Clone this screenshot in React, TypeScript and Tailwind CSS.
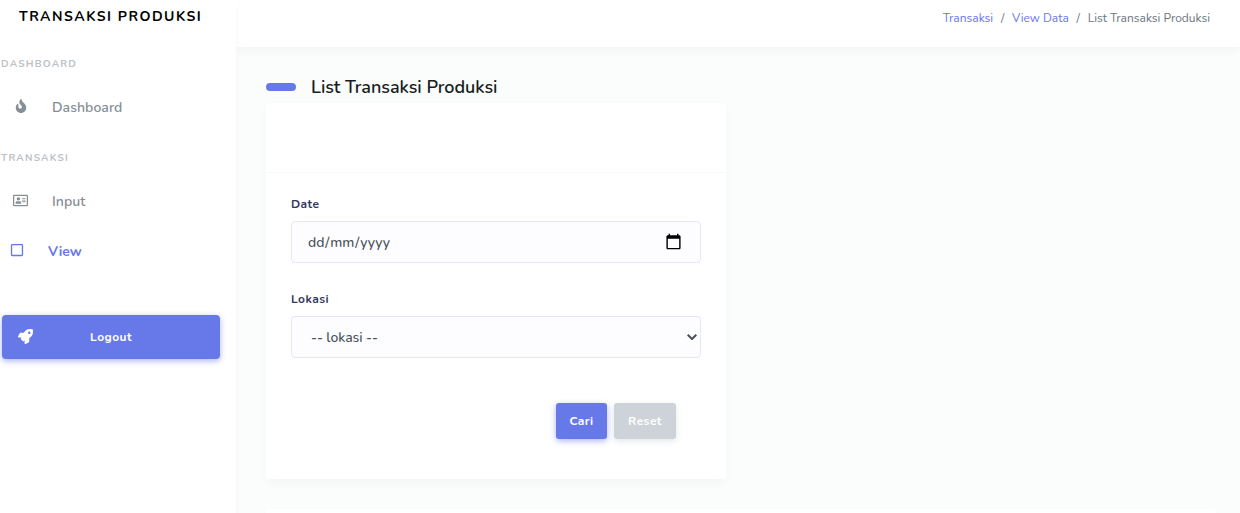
import type { ReactNode } from "react";
import { FaFire, FaRegAddressCard, FaRegSquare, FaRocket } from "react-icons/fa";

function MenuHeader({ children }: { children: ReactNode }) {
  return (
    <div className="flex h-[30px] items-center pl-px text-[10px] font-bold uppercase tracking-[1.2px] text-[#bcc1c6]">
      {children}
    </div>
  );
}

function Sidebar() {
  return (
    <aside className="relative z-10 flex h-[513px] w-[236px] shrink-0 flex-col bg-white shadow-[0_4px_8px_rgba(0,0,0,0.03)]">
      <div className="flex h-8 shrink-0 items-center pl-[19px] text-[14px] font-bold tracking-[1.5px] text-black">
        TRANSAKSI PRODUKSI
      </div>
      <nav className="flex flex-col pt-[17px]">
        <MenuHeader>Dashboard</MenuHeader>
        <a className="mt-1 flex h-[50px] items-center pb-[2px] text-[14px] font-semibold tracking-[0.05px] text-[#868e96]">
          <span className="flex w-[52px] pb-[2px] pl-[14px]"><FaFire className="h-[14px] w-[14px]" /></span>
          Dashboard
        </a>
        <div className="mt-[10px]">
          <MenuHeader>Transaksi</MenuHeader>
        </div>
        <a className="mt-1 flex h-[50px] items-center pb-[2px] text-[14px] font-semibold tracking-[0.05px] text-[#868e96]">
          <span className="flex w-[52px] pb-[2px] pl-[13px]"><FaRegAddressCard className="h-[15px] w-[15px]" /></span>
          Input
        </a>
        <a className="flex h-[50px] items-center pb-[2px] text-[14px] font-bold text-[#6777e8]">
          <span className="flex w-[48px] pb-[2px] pl-[10px]"><FaRegSquare className="h-[14px] w-[14px]" /></span>
          View
        </a>
      </nav>
      <button className="ml-[2px] mt-[38px] flex h-[44px] w-[218px] shrink-0 items-center rounded bg-[#6779e8] text-[12px] font-bold tracking-[0.45px] text-white shadow-[0_2px_6px_#acb5f6]">
        <span className="flex w-[88px] pb-[2px] pl-4"><FaRocket className="h-[15px] w-[15px]" /></span>
        Logout
      </button>
    </aside>
  );
}

function Breadcrumb() {
  return (
    <div className="flex h-[47px] shrink-0 justify-end bg-white pr-[30px] pt-[9px] text-[12px] leading-[18px] text-[#6c757d] shadow-[0_4px_8px_rgba(0,0,0,0.03)]">
      <span className="text-[#6777e8]">Transaksi</span>
      <span className="px-[7.8px]">/</span>
      <span className="text-[#6777e8]">View Data</span>
      <span className="px-[7.8px]">/</span>
      <span>List Transaksi Produksi</span>
    </div>
  );
}

function CalendarIcon() {
  return (
    <svg viewBox="0 0 24 24" className="mb-px h-[17px] w-[17px]" fill="#000">
      <path d="M20 3h-1V1h-2v2H7V1H5v2H4c-1.1 0-2 .9-2 2v16c0 1.1.9 2 2 2h16c1.1 0 2-.9 2-2V5c0-1.1-.9-2-2-2zm0 18H4V8h16v13z" />
    </svg>
  );
}

function Label({ children }: { children: ReactNode }) {
  return (
    <div className="h-[26px] text-[12px] font-bold leading-[18px] tracking-[0.4px] text-[#34395e]">{children}</div>
  );
}

export default function App() {
  return (
    <div className="flex h-[513px] w-[1240px] overflow-hidden bg-[#fafdfb] font-['Nunito','Lato',sans-serif]">
      <Sidebar />
      <main className="flex min-w-0 flex-1 flex-col">
        <Breadcrumb />
        <div className="flex flex-col px-[30px] pt-[24px]">
          <h2 className="flex h-8 items-center text-[18px] font-semibold tracking-[-0.03px] text-[#191d21]">
            <span className="mr-[15px] h-2 w-[30px] rounded-full bg-[#6779e8]" />
            List Transaksi Produksi
          </h2>
          <section className="h-[376px] w-[460px] rounded-[3px] bg-white shadow-[0_4px_8px_rgba(0,0,0,0.03)]">
            <div className="h-[70px] border-b border-[#f9f9f9]" />
            <div className="flex flex-col px-[25px] pt-[22px]">
              <Label>Date</Label>
              <div className="flex h-[42px] items-center justify-between rounded border border-[#e4e6fc] bg-[#fdfdff] pl-[15px] pr-[18px] text-[14px] font-medium tracking-[-0.08px] text-[#495057]">
                <span className="flex">
                  <span className="px-px">dd</span>/<span className="px-px">mm</span>/<span className="px-px">yyyy</span>
                </span>
                <CalendarIcon />
              </div>
              <div className="mt-[27px]">
                <Label>Lokasi</Label>
              </div>
              <div className="flex h-[42px] items-center justify-between rounded border border-[#e4e6fc] bg-[#fdfdff] pl-[19px] pr-[3px] text-[14px] font-medium tracking-[-0.08px] text-[#495057]">
                <span>-- lokasi --</span>
                <svg viewBox="0 0 10 6" className="h-[6px] w-[10px]" fill="none" stroke="#495057" strokeWidth="2">
                  <path d="M0.7 0.7L5 5L9.3 0.7" />
                </svg>
              </div>
              <div className="mt-[45px] flex justify-end gap-[7px] pr-[25px] text-[12px] font-bold tracking-[0.45px] text-white">
                <button className="h-9 w-[51px] rounded-[3px] bg-[#6779e8] shadow-[0_2px_6px_#acb5f6]">Cari</button>
                <button className="h-9 w-[62px] rounded-[3px] bg-[#cdd3d8] shadow-[0_2px_6px_#e1e5e8]">Reset</button>
              </div>
            </div>
          </section>
          <section className="mt-[30px] h-10 w-[950px] rounded-[3px] bg-white shadow-[0_4px_8px_rgba(0,0,0,0.03)]" />
        </div>
      </main>
    </div>
  );
}
